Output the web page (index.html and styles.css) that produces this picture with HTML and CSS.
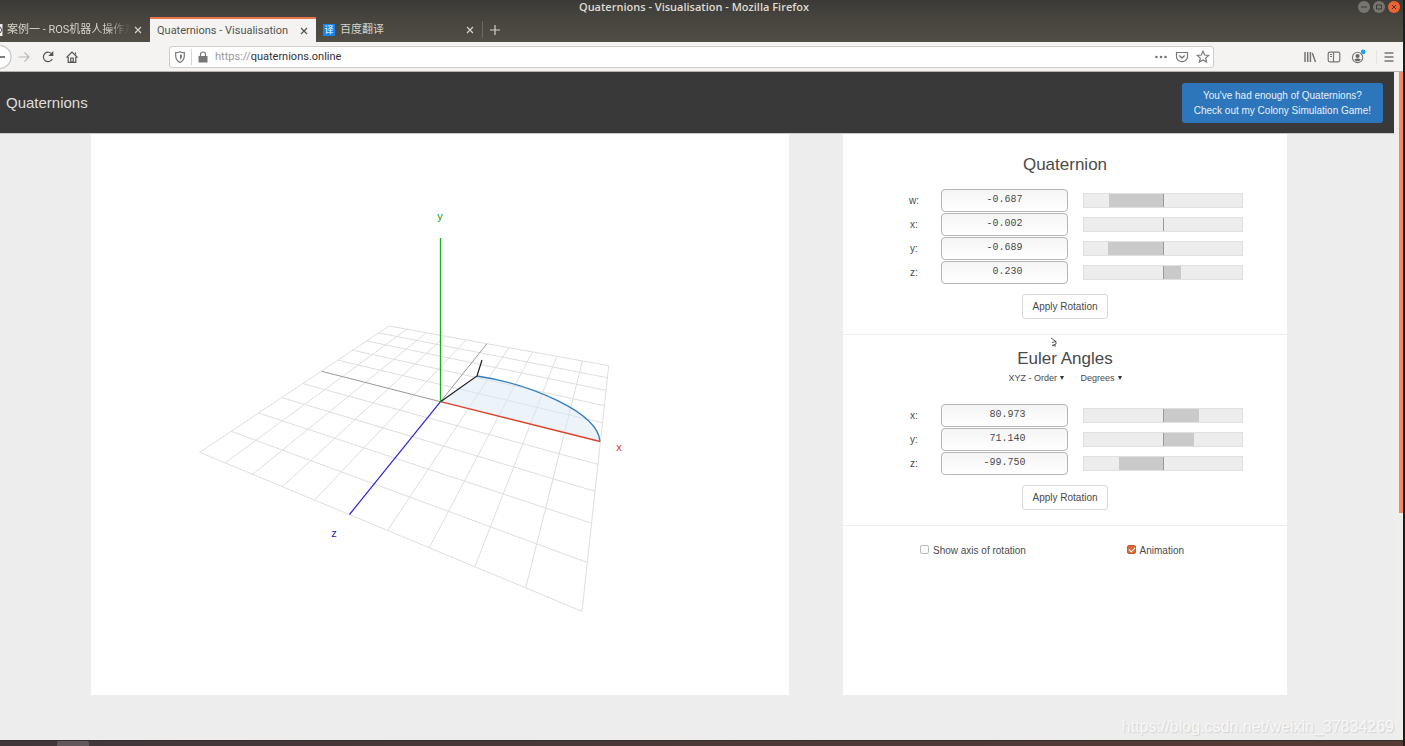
FILE: index.html
```html
<!DOCTYPE html>
<html lang="en">
<head>
<meta charset="utf-8">
<title>Quaternions - Visualisation</title>
<link rel="stylesheet" href="styles.css">
</head>
<body>
<div class="window">
  <header class="titlebar">
    <span class="titlebar-text">Quaternions - Visualisation - Mozilla Firefox</span>
    <div class="window-buttons">
      <button class="win-btn" aria-label="Minimise"><svg viewBox="0 0 12 12"><path d="M3 6h6"/></svg></button>
      <button class="win-btn" aria-label="Maximise"><svg viewBox="0 0 12 12"><path d="M3.500 4h5v4h-5z"/></svg></button>
      <button class="win-btn win-close" aria-label="Close"><svg viewBox="0 0 12 12"><path d="M4 4l4 4M8 4l-4 4"/></svg></button>
    </div>
  </header>

  <nav class="tabs" aria-label="Tabs">
    <div class="tab tab-first">
      <svg class="favicon-cut" viewBox="0 0 3 14"><path d="M0 1h2.500v12H0z" fill="#eee"/><path d="M0 4l2 3-2 3" fill="none" stroke="#444"/></svg>
      <span class="tab-title tab-fade">案例一 - ROS机器人操作系</span>
      <button class="tab-close" aria-label="Close tab"><svg viewBox="0 0 8 8"><path d="M1 1l6 6M7 1L1 7"/></svg></button>
    </div>
    <div class="tab tab-active">
      <span class="tab-title">Quaternions - Visualisation</span>
      <button class="tab-close" aria-label="Close tab"><svg viewBox="0 0 8 8"><path d="M1 1l6 6M7 1L1 7"/></svg></button>
    </div>
    <div class="tab tab-third">
      <span class="favicon">译</span>
      <span class="tab-title">百度翻译</span>
      <button class="tab-close" aria-label="Close tab"><svg viewBox="0 0 8 8"><path d="M1 1l6 6M7 1L1 7"/></svg></button>
    </div>
    <button class="tab-new" aria-label="New tab"><svg viewBox="0 0 10 10"><path d="M5 0v10M0 5h10"/></svg></button>
  </nav>

  <div class="toolbar">
    <div class="nav-buttons">
      <button class="tool back" aria-label="Back"><svg viewBox="0 0 12 24"><path d="M-12 12a11.500 11.500 0 0 1 23 0a11.500 11.500 0 0 1-23 0z" fill="#fff" stroke="#c4c4c2"/><path d="M-4 12h9" stroke="#555" stroke-width="1.500"/></svg></button>
      <button class="tool forward" aria-label="Forward"><svg viewBox="0 0 14 14"><path d="M1.500 7h10M7.500 2.500L12 7l-4.500 4.500"/></svg></button>
      <button class="tool" aria-label="Reload"><svg viewBox="0 0 14 14"><path d="M11.300 9A4.700 4.700 0 1 1 11 4.300"/><path d="M12.300 1v5h-5z" fill="#555" stroke="none"/></svg></button>
      <button class="tool" aria-label="Home"><svg viewBox="0 0 14 14"><path d="M1.500 7.500L7 2l5.500 5.500M3.200 7v5.300h7.600V7"/><path d="M5.800 12V8h2.400v4z"/><path d="M10.500 2.500v2"/></svg></button>
    </div>
    <div class="urlbar">
      <svg class="icon" viewBox="0 0 14 14"><path d="M7 1.700c1.500.8 2.800 1 4.300 1V6c0 3-1.500 5-4.300 6.500C4.200 11 2.700 9 2.700 6V2.700c1.500 0 2.800-.2 4.300-1z"/><path d="M7 4.300v5.500c1.500-1 2-2.300 2-3.800V4.900C8.300 4.900 7.600 4.700 7 4.300z" fill="#777" stroke="none"/></svg>
      <span class="url-sep"></span>
      <svg class="icon lock" viewBox="0 0 14 14"><path d="M4.500 7V4.500a2.500 2.500 0 0 1 5 0V7"/><path d="M2.500 6h9v6.500h-9z" fill="#777" stroke="none"/></svg>
      <label class="url-scheme" for="url">https://</label>
      <input class="url-input" id="url" type="text" value="quaternions.online">
      <button class="tool" aria-label="Page actions"><svg viewBox="0 0 14 14"><g fill="#777" stroke="none"><circle cx="2.500" cy="7" r="1.300"/><circle cx="7" cy="7" r="1.300"/><circle cx="11.500" cy="7" r="1.300"/></g></svg></button>
      <button class="tool" aria-label="Save to Pocket"><svg viewBox="0 0 14 14"><path d="M1.500 2.500h11v4a5.500 5.200 0 0 1-11 0z"/><path d="M4.300 5.500L7 8l2.700-2.500" stroke-width="1.500"/></svg></button>
      <button class="tool" aria-label="Bookmark"><svg viewBox="0 0 14 14"><path d="M7 1.300l1.700 3.700 4 .4-3 2.700.9 4L7 10l-3.600 2.100.9-4-3-2.700 4-.4z"/></svg></button>
    </div>
    <div class="toolbar-end">
      <button class="tool" aria-label="Library"><svg viewBox="0 0 14 14"><path d="M2 2v10M4.700 2v10M7.400 2v10M9.300 3l3.200 9" stroke-width="1.500"/></svg></button>
      <button class="tool" aria-label="Sidebars"><svg viewBox="0 0 14 14"><rect x="1.200" y="2.200" width="11.600" height="9.600" rx="1.500"/><path d="M6.500 2v10M3 4.500h2M3 6.500h2"/></svg></button>
      <button class="tool account" aria-label="Account"><svg viewBox="0 0 16 16"><circle cx="7" cy="9" r="5.500"/><circle cx="7" cy="7.500" r="2.200" fill="#666" stroke="none"/><path d="M3.500 11.300q3.500-2.500 7 0l-2 1.700h-3z" fill="#666" stroke="none"/><circle cx="13" cy="3" r="2.500" fill="#12a5f5" stroke="none"/></svg></button>
      <button class="tool menu" aria-label="Menu"><svg viewBox="0 0 14 14"><path d="M2.500 3h9M2.500 7h9M2.500 11h9" stroke-width="1.500"/></svg></button>
    </div>
  </div>

  <div class="viewport">
    <div class="page">
      <header class="page-header">
        <a class="brand" href="#">Quaternions</a>
        <a class="promo" href="#">You've had enough of Quaternions?<br>Check out my Colony Simulation Game!</a>
      </header>
      <main class="content">
        <section class="panel" aria-label="Rotation view">
          <svg class="scene" viewBox="91 134 698 561">
            <g class="grid-lines">
              <path d="M389 326L199.700 452.300M406.700 329.300L225 463M426 333L252.700 474.300M445 336.300L282.400 486.700M465.700 340.300L314.600 500.100M508.700 348L387.700 530.300M532.300 352.300L429.300 547.700M556.700 356.700L475 566.300M582.300 361.300L525.700 588M608.700 365.700L582 611.300"/>
              <path d="M389 326L608.700 365.700M379 333L607.300 377.700M366.700 341L605.700 390.300M353.300 350.300L604 405.700M338.300 360.300L602 422.700M303.300 383.700L597.700 464.300M282 397.700L595 491.300M258.700 413L591 523M231.300 431.300L586.700 562.300M199.700 452.300L582 611.300"/>
            </g>
            <path class="axis-back" d="M321.700 371.300L440.500 401.700L486.700 344"/>
            <path class="sweep" d="M440.500 401.700L477 376C530 384 598 412 600 441.500z"/>
            <path class="arc" d="M477 376C530 384 598 412 600 441.500"/>
            <path class="axis-z" d="M440.500 401.700L349.500 514.500"/>
            <path class="axis-x" d="M440.500 401.700L600 441.500"/>
            <path class="arm" d="M440.500 401.700L477 376L482 360"/>
            <path class="axis-y" d="M440.500 238V401.700"/>
            <text class="label-y" x="440" y="220">y</text>
            <text class="label-x" x="619" y="451">x</text>
            <text class="label-z" x="334" y="537">z</text>
          </svg>
        </section>

        <section class="panel controls">
          <form class="group">
            <h2>Quaternion</h2>
            <div class="rows">
              <div class="row"><label for="qw">w:</label><input id="qw" type="text" value="-0.687"><div class="bar"><span class="fill" style="left:15.600%;width:34.400%"></span></div></div>
              <div class="row"><label for="qx">x:</label><input id="qx" type="text" value="-0.002"><div class="bar"></div></div>
              <div class="row"><label for="qy">y:</label><input id="qy" type="text" value="-0.689"><div class="bar"><span class="fill" style="left:15.500%;width:34.500%"></span></div></div>
              <div class="row"><label for="qz">z:</label><input id="qz" type="text" value=" 0.230"><div class="bar"><span class="fill" style="left:50%;width:11.500%"></span></div></div>
            </div>
            <button class="apply" type="button">Apply Rotation</button>
          </form>
          <form class="group">
            <h2>Euler Angles</h2>
            <div class="selects">
              <span class="select"><select aria-label="Order"><option>XYZ - Order</option></select></span>
              <span class="select"><select aria-label="Unit"><option>Degrees</option></select></span>
            </div>
            <div class="rows">
              <div class="row"><label for="ex">x:</label><input id="ex" type="text" value=" 80.973"><div class="bar"><span class="fill" style="left:50%;width:22.500%"></span></div></div>
              <div class="row"><label for="ey">y:</label><input id="ey" type="text" value=" 71.140"><div class="bar"><span class="fill" style="left:50%;width:19.500%"></span></div></div>
              <div class="row"><label for="ez">z:</label><input id="ez" type="text" value="-99.750"><div class="bar"><span class="fill" style="left:22.300%;width:8%"></span><span class="fill" style="left:30.600%;width:19.400%"></span></div></div>
            </div>
            <button class="apply" type="button">Apply Rotation</button>
          </form>
          <div class="options">
            <label><input type="checkbox">Show axis of rotation</label>
            <label><input type="checkbox" checked>Animation</label>
          </div>
          <svg class="pointer" viewBox="0 0 8 10"><path d="M1 1l5 3.500-4 1M6 4.500V7L2 8.500L6 9" fill="none" stroke="#555"/></svg>
        </section>
      </main>
    </div>
    <div class="scrollbar"><div class="thumb"></div></div>
    <div class="watermark">https://blog.csdn.net/weixin_37834269</div>
  </div>
  <footer class="taskbar"><span class="task"></span></footer>
</div>
</body>
</html>
```
FILE: styles.css
```css
* { box-sizing: border-box; }

body {
  margin: 0;
  background: #1c1d1d;
  font-family: "Liberation Sans", Arial, sans-serif;
  color: #4a4a4a;
}

button, input, select { font: inherit; color: inherit; }
button { padding: 0; border: 0; background: none; }
a { text-decoration: none; }
svg { display: block; }

.window {
  display: flex;
  flex-direction: column;
  min-height: 100vh;
  margin-right: 2px;
}

/* Browser frame */
.titlebar, .tabs, .toolbar {
  font-family: Roboto, "Noto Sans CJK SC", sans-serif;
  font-size: 11px;
}

.titlebar {
  display: grid;
  grid-template-columns: 1fr auto 1fr;
  align-items: center;
  height: 16px;
  padding: 0 3px 2px;
  background: linear-gradient(#3b3a36, #45433d);
  color: #dedbd2;
  font-family: "Open Sans", sans-serif;
  font-weight: 600;
  line-height: 14px;
}
.titlebar-text { grid-column: 2; margin-right: 15px; }
.window-buttons { display: flex; justify-content: flex-end; gap: 3px; }
.win-btn { width: 12px; height: 12px; border-radius: 50%; background: #77756e; }
.win-btn path { fill: none; stroke: #3b3a36; }
.win-close { background: #f0632c; }

.tabs {
  display: flex;
  align-items: stretch;
  height: 26px;
  padding-top: 1px;
  background: linear-gradient(#45433d, #504e45);
  color: #d5d2c9;
}
.tab { display: flex; align-items: center; width: 166px; padding: 0 8px 0 7px; }
.tab-first { width: 150px; padding-left: 0; gap: 4px; }
.tab-active { background: #f4f3f2; color: #55534f; border-top: 2px solid #e8764b; }
.tab-third { gap: 5px; }
.tab-title { flex: 1; min-width: 0; white-space: nowrap; line-height: 16px; }
.tab-fade { -webkit-mask-image: linear-gradient(to right, #000 80%, transparent); mask-image: linear-gradient(to right, #000 80%, transparent); }
.tab-close svg { width: 8px; height: 8px; }
.tab-close path, .tab-new path { fill: none; stroke: currentColor; stroke-width: 1.2; }
.favicon-cut { width: 3px; height: 14px; }
.favicon {
  width: 12px;
  background: #1684ee;
  color: #fff;
  font-size: 9px;
  line-height: 12px;
  text-align: center;
}
.tab-new { margin: 4px 0; padding: 0 7px; border-left: 1px solid #6b6960; }
.tab-new svg { width: 10px; height: 10px; }

.toolbar {
  display: flex;
  align-items: center;
  height: 30px;
  background: #f4f3f2;
  border-bottom: 1px solid #b5b3b0;
}
.tool svg, .icon { width: 14px; height: 14px; fill: none; stroke: #777; stroke-width: 1.2; flex: none; }
.nav-buttons { display: flex; align-items: center; gap: 10px; width: 169px; }
.nav-buttons svg { stroke: #555; }
.nav-buttons .back svg { width: 12px; height: 24px; }
.nav-buttons .forward { margin-left: -5px; }
.nav-buttons .forward svg { stroke: #b8b8b6; }
.urlbar {
  display: flex;
  align-items: center;
  flex: 1;
  height: 22px;
  padding: 0 3px;
  background: #fff;
  border: 1px solid #cfcecb;
  border-radius: 3px;
}
.url-sep { width: 1px; height: 16px; margin: 0 4px; background: #d5d5d5; }
.url-scheme { margin-left: 5px; color: #999; }
.url-input { flex: 1; min-width: 0; padding: 0; border: 0; outline: 0; background: none; color: #333; }
.urlbar .tool { margin-left: 7px; }
.toolbar-end { display: flex; align-items: center; gap: 10px; width: 189px; padding-right: 7px; justify-content: flex-end; }
.toolbar-end .account svg { width: 15px; height: 15px; }
.toolbar-end .menu { padding-left: 5px; border-left: 1px solid #e4e3e1; }

/* Page */
.viewport { position: relative; display: flex; flex: 1; background: #ededed; }
.page { flex: 1; min-width: 0; }
.page-header {
  display: flex;
  align-items: center;
  justify-content: space-between;
  height: 62px;
  padding: 0 11px 0 6px;
  background: #393939;
  border-bottom: 1px solid #c9c9c9;
}
.brand { color: #dedede; font-size: 15px; }
.promo {
  padding: 5px 12px;
  border-radius: 3px;
  background: #2d76bc;
  color: #e8f0f8;
  font-size: 10px;
  line-height: 15px;
  text-align: center;
}
.content {
  display: grid;
  grid-template-columns: 698fr 444fr;
  gap: 54px;
  padding: 0 107px 45px 91px;
}
.panel { background: #fff; }

.scene { width: 100%; height: auto; fill: none; }
.grid-lines { stroke: #dedede; }
.axis-back { stroke: #999; }
.sweep { fill: #d9e9f6; fill-opacity: 0.5; }
.arc { stroke: #2f7cbf; stroke-width: 1.3; }
.axis-x { stroke: #e2412b; stroke-width: 1.3; }
.axis-y { stroke: #17b01c; stroke-width: 1.3; }
.axis-z { stroke: #2a23dc; stroke-width: 1.2; }
.arm { stroke: #1d1d1d; stroke-width: 1.2; }
.scene text { font-size: 11px; text-anchor: middle; }
.label-x { fill: #d93a2a; }
.label-y { fill: #1b9a20; }
.label-z { fill: #2b25b5; }

.controls { position: relative; font-size: 10px; }
.group {
  display: flex;
  flex-direction: column;
  align-items: center;
  padding-bottom: 15px;
  border-bottom: 1px solid #eee;
}
h2 { margin: 21px 0 13px; font-size: 17px; font-weight: normal; line-height: 20px; }
.group + .group h2 { margin: 14px 0 3px; }
.rows { align-self: stretch; padding: 0 44px 0 59px; }
.row {
  display: grid;
  grid-template-columns: 24px 127fr 160fr;
  gap: 15px;
  align-items: center;
  height: 24px;
}
.row label { text-align: center; }
.row input {
  width: 100%;
  min-width: 0;
  height: 23px;
  padding: 0 0 1px;
  border: 1px solid #b5b5b5;
  border-radius: 4px;
  background: linear-gradient(#f5f5f5, #fff);
  font-family: "Liberation Mono", monospace;
  font-size: 10px;
  text-align: center;
}
.bar { position: relative; height: 15px; background: #ededed; border: 1px solid #e0e0e0; }
.bar::after { content: ""; position: absolute; left: 50%; top: 0; bottom: 0; width: 1px; background: #999; }
.fill { position: absolute; top: 0; bottom: 0; background: #cacaca; }
.apply {
  height: 25px;
  margin-top: 10px;
  padding: 0 9px;
  border: 1px solid #d8d8d8;
  border-radius: 3px;
  background: #fff;
}
.selects { display: flex; gap: 17px; margin-bottom: 19px; font-size: 9px; line-height: 12px; }
.select { display: flex; align-items: center; gap: 2px; }
.select::after { content: ""; border: 2px solid transparent; border-top: 4px solid #333; border-bottom: 0; }
.select select { appearance: none; padding: 0; border: 0; background: none; }
.options { display: flex; padding: 17px 77px; }
.options label { display: flex; align-items: center; gap: 4px; line-height: 15px; }
.options label + label { margin-left: auto; margin-right: 26px; }
.options input {
  appearance: none;
  width: 9px;
  height: 9px;
  margin: 0 0 3px;
  border: 1px solid #bbb;
  border-radius: 2px;
  background: #fafafa;
}
.options input:checked { border-color: #c9582b; background: #dc6a39; }
.options input:checked::after {
  content: "";
  display: block;
  width: 5px;
  height: 3px;
  margin: 1px;
  border: solid #fff;
  border-width: 0 0 1px 1px;
  transform: rotate(-45deg);
}
.pointer { position: absolute; left: 207px; top: 203px; width: 8px; height: 10px; }

.scrollbar { width: 9px; background: #eeeeec; }
.thumb { width: 4px; height: 66%; margin-left: auto; background: #f58a5c; }
.watermark {
  position: absolute;
  right: 9px;
  bottom: 4px;
  color: #f8f8f8;
  font-size: 16px;
  line-height: 18px;
  text-shadow: 1px 1px 1px #d0d0d0;
}
.taskbar { height: 6px; padding-left: 57px; background: linear-gradient(to right, #40363a, #563b35); border-top: 1px solid #33302e; }
.task { display: block; width: 32px; height: 5px; background: #63585c; border-radius: 2px 2px 0 0; }
```
